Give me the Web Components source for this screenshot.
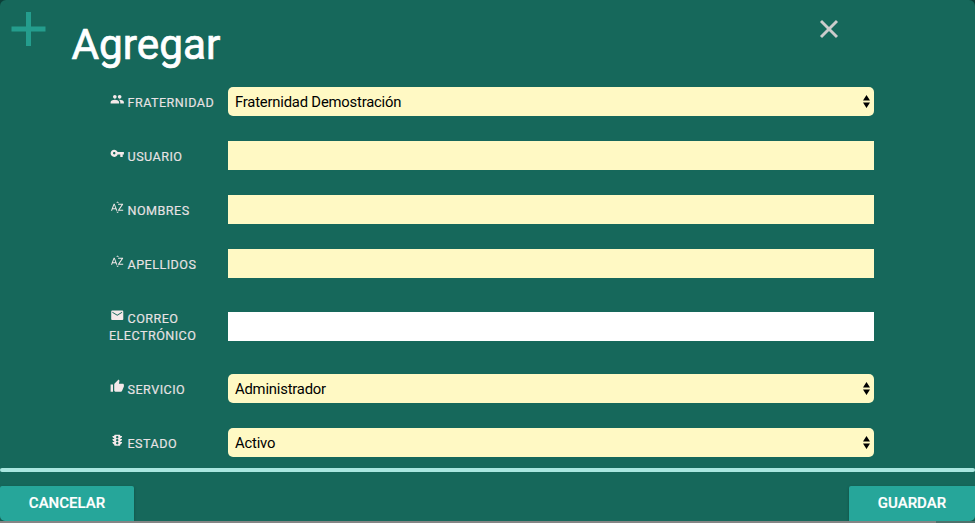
<!DOCTYPE html>
<html lang="es"><head><meta charset="utf-8"><title>Agregar</title>
<style>
html,body{margin:0;height:100%;overflow:hidden;background:#0c3f38}
body{font-family:Roboto,"Liberation Sans",sans-serif}
</style></head><body>
<user-dialog heading="Agregar">
  <form-row icon="people" label="Fraternidad"><form-field kind="select">Fraternidad Demostración</form-field></form-row>
  <form-row icon="key" label="Usuario"><form-field></form-field></form-row>
  <form-row icon="alpha" label="Nombres"><form-field></form-field></form-row>
  <form-row icon="alpha" label="Apellidos"><form-field></form-field></form-row>
  <form-row class="tall" icon="email" label="Correo electrónico"><form-field kind="plain"></form-field></form-row>
  <form-row icon="thumb" label="Servicio"><form-field kind="select">Administrador</form-field></form-row>
  <form-row icon="traffic" label="Estado"><form-field kind="select">Activo</form-field></form-row>
  <action-button slot="actions" side="left">Cancelar</action-button>
  <action-button slot="actions" side="right">Guardar</action-button>
</user-dialog>
<script>
const ICONS={
people:'M16 11c1.66 0 2.99-1.34 2.99-3S17.66 5 16 5s-3 1.34-3 3 1.34 3 3 3zm-8 0c1.66 0 2.99-1.34 2.99-3S9.66 5 8 5 5 6.34 5 8s1.34 3 3 3zm0 2c-2.33 0-7 1.17-7 3.5V19h14v-2.5c0-2.33-4.67-3.5-7-3.5zm8 0c-.29 0-.62.02-.97.05 1.16.84 1.97 1.97 1.97 3.45V19h6v-2.5c0-2.33-4.67-3.5-7-3.5z',
key:'M12.65 10C11.83 7.67 9.61 6 7 6c-3.31 0-6 2.69-6 6s2.69 6 6 6c2.61 0 4.83-1.67 5.65-4H17v4h4v-4h2v-4H12.65zM7 14c-1.1 0-2-.9-2-2s.9-2 2-2 2 .9 2 2-.9 2-2 2z',
alpha:'M14.94 4.66h-4.72l2.36-2.36zm-4.69 14.71h4.66l-2.33 2.33zM6.1 6.27L1.6 17.73h1.84l.92-2.45h5.11l.92 2.45h1.84L7.74 6.27H6.1zm-1.13 7.37l1.94-5.18 1.94 5.18H4.97zm10.76 2.5h6.12v1.59h-8.53v-1.29l5.92-8.56h-5.88v-1.6h8.3v1.26l-5.93 8.6z',
email:'M20 4H4c-1.1 0-1.99.9-1.99 2L2 18c0 1.1.9 2 2 2h16c1.1 0 2-.9 2-2V6c0-1.1-.9-2-2-2zm0 4l-8 5-8-5V6l8 5 8-5v2z',
thumb:'M1 21h4V9H1v12zm22-11c0-1.1-.9-2-2-2h-6.31l.95-4.57.03-.32c0-.41-.17-.79-.44-1.06L14.17 1 7.59 7.59C7.22 7.95 7 8.45 7 9v10c0 1.100.9 2 2 2h9c.83 0 1.540-.5 1.840-1.220l3.020-7.050c.09-.23.14-.47.14-.73v-2z',
traffic:'M20 10h-3V8.860c1.720-.450 3-2 3-3.860h-3V4c0-.55-.45-1-1-1H8c-.55 0-1 .45-1 1v1H4c0 1.860 1.280 3.410 3 3.860V10H4c0 1.860 1.280 3.410 3 3.860V15H4c0 1.860 1.280 3.410 3 3.860V20c0 .55.45 1 1 1h8c.55 0 1-.45 1-1v-1.140c1.720-.45 3-2 3-3.860h-3v-1.140c1.720-.45 3-2 3-3.860zm-8 9c-1.110 0-2-.9-2-2s.89-2 2-2c1.100 0 2 .9 2 2s-.89 2-2 2zm0-5c-1.110 0-2-.9-2-2s.89-2 2-2c1.100 0 2 .9 2 2s-.89 2-2 2zm0-5c-1.110 0-2-.9-2-2s.89-2 2-2c1.100 0 2 .9 2 2s-.89 2-2 2z'
};
customElements.define('user-dialog',class extends HTMLElement{
  connectedCallback(){this.attachShadow({mode:'open'}).innerHTML=`<style>
:host{display:flex;flex-direction:column;height:100vh;box-sizing:border-box;overflow:hidden;background:#16685b;border-radius:6px 6px 0 0}
header{height:74px;flex:none;display:flex;align-items:flex-start}
.plus{display:block;margin:12px 0 0 11px;flex:none}
h1{margin:20px auto 0 25.5px;font-weight:400;font-size:42.3px;line-height:49px;color:#fff;-webkit-text-stroke:.7px #fff}
.close{display:block;margin:19px 136px 0 0;flex:none}
main{height:394px;flex:none;overflow:hidden;padding:0 101px 0 109px}
hr{height:4px;width:100%;flex:none;border:0;margin:0;background:#a9e6df;border-radius:2px}
footer{margin-top:14px;height:35px;flex:none;display:flex;justify-content:space-between}
.edge{height:2px;flex:none;background:linear-gradient(90deg,#858585 936px,#50716c 936px)}
</style><header>
<svg class="plus" width="35" height="34" viewBox="0 0 35 34"><path d="M15 0h5v14.500h14.500v5H20V34h-5V19.500H.500v-5H15z" fill="#249d8d"/></svg>
<h1>${this.getAttribute('heading')}</h1>
<svg class="close" width="20" height="20" viewBox="0 0 20 20"><path d="M2 2l16 16M18 2L2 18" stroke="#ccc" stroke-width="2.900"/></svg>
</header><main><slot></slot></main><hr><footer><slot name="actions"></slot></footer><div class="edge"></div>`}
});
customElements.define('form-row',class extends HTMLElement{
  connectedCallback(){this.attachShadow({mode:'open'}).innerHTML=`<style>
:host{display:grid;grid-template-columns:119px 1fr;height:54px;align-items:center}
:host(.tall){height:71px;box-sizing:border-box;padding-top:1px}
label{font-size:12.6px;line-height:18px;letter-spacing:.46px;color:#e8e2e4;text-transform:uppercase;-webkit-text-stroke:.15px #e8e2e4;padding-top:1px}
:host(.tall) label{line-height:17.5px;padding:0}
svg{display:inline-block;width:14.5px;height:14.5px;margin:0 3.5px 0 .5px;vertical-align:.5px;fill:#f5e9ea}
</style><label><svg viewBox="0 0 24 24"><path d="${ICONS[this.getAttribute('icon')]}"/></svg>${this.getAttribute('label')}</label><slot></slot>`}
});
customElements.define('form-field',class extends HTMLElement{
  connectedCallback(){const sel=this.getAttribute('kind')==='select';
  this.attachShadow({mode:'open'}).innerHTML=`<style>
:host{display:flex;align-items:center;justify-content:space-between;box-sizing:border-box;width:646px;height:29px;padding:0 4px 0 7px;background:#fff9c4;color:#000;font-size:14.8px;letter-spacing:-.19px;line-height:20px}
:host([kind=plain]){background:#fff}
:host([kind=select]){border-radius:5px}
span{padding-top:1px}
svg{display:block}
</style><span><slot></slot></span>${sel?'<svg width="7" height="13" viewBox="0 0 7 13"><path d="M0 5.500L3.500 0 7 5.500zM0 7.500h7L3.500 13z"/></svg>':''}`}
});
customElements.define('action-button',class extends HTMLElement{
  connectedCallback(){this.attachShadow({mode:'open'}).innerHTML=`<style>
:host{display:flex;box-sizing:border-box;width:134px;height:35px;background:#26a69a;border-radius:2px 2px 0 5px;box-shadow:0 1px 3px #0004}
:host([side=right]){width:126px;border-radius:2px 0 5px 0}
button{all:unset;width:100%;text-align:center;font-size:15px;font-weight:500;line-height:35px;color:#fff;text-transform:uppercase;-webkit-text-stroke:.2px #fff}
</style><button><slot></slot></button>`}
});
</script></body></html>
